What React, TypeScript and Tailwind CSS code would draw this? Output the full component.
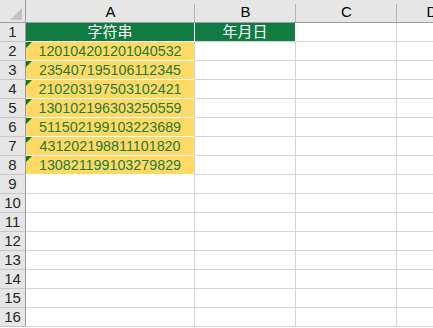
import React from "react";

const data = [
  "120104201201040532",
  "235407195106112345",
  "210203197503102421",
  "130102196303250559",
  "511502199103223689",
  "431202198811101820",
  "130821199103279829",
];

const font = { fontFamily: '"Liberation Sans", Arial, sans-serif' };
const cjk = { fontFamily: '"Liberation Sans", "Noto Sans CJK SC", sans-serif' };

function ColHead({ label, w, last }: { label: string; w: string; last?: boolean }) {
  return (
    <div className={`relative ${w} h-full flex items-center justify-center text-[15px] text-black shrink-0`} style={font}>
      <span className="pt-[2px]">{label}</span>
      {!last && <div className="absolute right-0 top-[4px] bottom-0 w-px bg-[#b4b4b4]" />}
    </div>
  );
}

function Tri() {
  return (
    <div className="absolute left-0 top-0 w-0 h-0 border-t-[6px] border-t-[#107c10] border-r-[6px] border-r-transparent" />
  );
}

export default function App() {
  const rows = Array.from({ length: 16 }, (_, i) => i + 1);
  return (
    <div className="w-[433px] h-[328px] overflow-hidden bg-white">
      <div className="flex h-[23px] bg-[#e6e6e6] border-b border-[#9c9c9c]">
        <div className="relative w-[26px] h-full border-r border-[#9c9c9c] shrink-0">
          <svg className="absolute left-[10px] top-[8px]" width="12" height="12" viewBox="0 0 12 12">
            <polygon points="12,0 12,12 0,12" fill="#c2c2c2" />
          </svg>
        </div>
        <ColHead label="A" w="w-[169px]" />
        <ColHead label="B" w="w-[101px]" />
        <ColHead label="C" w="w-[101px]" />
        <ColHead label="D" w="w-[70px]" last />
      </div>
      {rows.map((r) => {
        const isHead = r === 1;
        const isData = r >= 2 && r <= 8;
        return (
          <div key={r} className="flex h-[19px]">
            <div
              className="w-[26px] h-full bg-[#e6e6e6] border-r border-r-[#9c9c9c] border-b border-b-[#c6c6c6] flex items-center justify-center text-[15px] text-[#262626] shrink-0"
              style={font}
            >
              <span className="pt-[1px]">{r}</span>
            </div>
            {isHead ? (
              <>
                <div className="w-[169px] h-full bg-[#107c41] border-r border-r-white border-b border-b-white flex items-center justify-center text-white text-[15px] shrink-0" style={cjk}>
                  字符串
                </div>
                <div className="w-[101px] h-full bg-[#107c41] border-r border-r-white border-b border-b-[#d4d4d4] flex items-center justify-center text-white text-[15px] shrink-0" style={cjk}>
                  年月日
                </div>
              </>
            ) : isData ? (
              <>
                <div className="relative w-[169px] h-full bg-[#ffd966] border-r border-r-[#d4d4d4] border-b border-b-white flex items-center justify-center text-[#1d7b3a] text-[14.3px] shrink-0" style={font}>
                  <Tri />
                  <span className="pt-[1px]">{data[r - 2]}</span>
                </div>
                <div className="w-[101px] h-full border-r border-b border-[#d4d4d4] shrink-0" />
              </>
            ) : (
              <>
                <div className="w-[169px] h-full border-r border-b border-[#d4d4d4] shrink-0" />
                <div className="w-[101px] h-full border-r border-b border-[#d4d4d4] shrink-0" />
              </>
            )}
            <div className="w-[101px] h-full border-r border-b border-[#d4d4d4] shrink-0" />
            <div className="w-[70px] h-full border-b border-[#d4d4d4] shrink-0" />
          </div>
        );
      })}
    </div>
  );
}
